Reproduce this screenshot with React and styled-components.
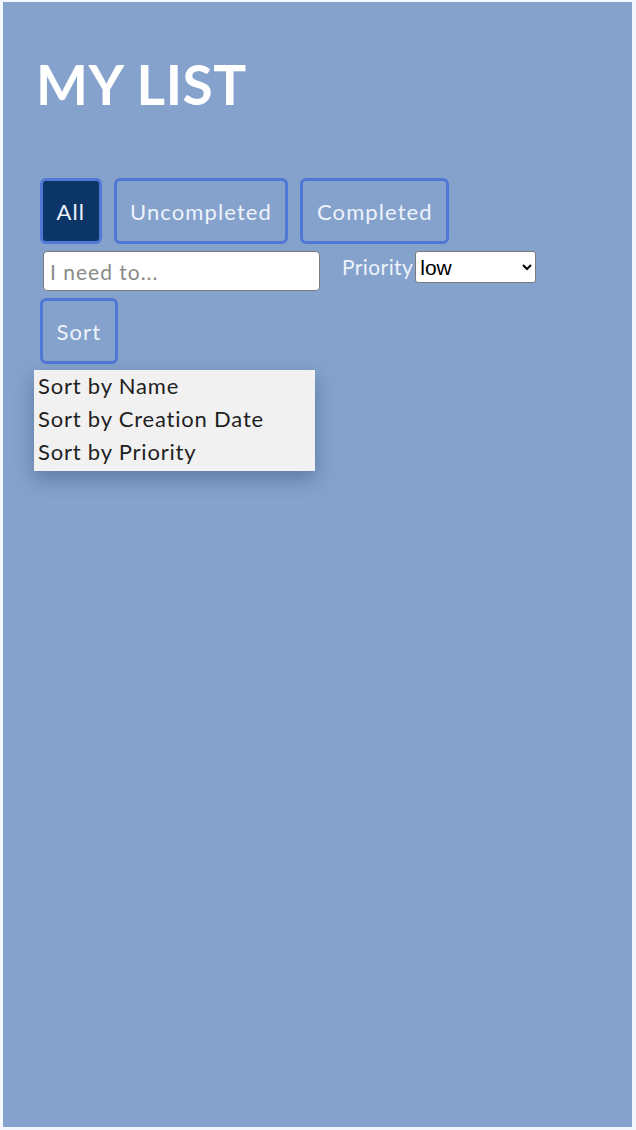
import styled, { createGlobalStyle } from "styled-components";

const GlobalStyle = createGlobalStyle`
    html, body {
        margin: 0;
        padding: 0;
        background: #f4f7fb;
    }
    body {
        font-family: Lato, "Noto Sans", sans-serif;
    }
`;

const Page = styled.div`
    margin: 2px 4px 3px 3px;
    height: 1125px;
    background: #84a2cc;
    padding: 50px 0 0 33px;
    box-sizing: border-box;
`;

const Title = styled.h1`
    margin: 0 0 62px;
    font-size: 55px;
    font-weight: 700;
    color: #ffffff;
    line-height: 64px;
    letter-spacing: 0.6px;
`;

const Controls = styled.div`
    padding-left: 4px;
    display: flex;
    flex-direction: column;
    gap: 7px;
`;

const Filters = styled.div`
    display: flex;
    gap: 12px;
`;

const Button = styled.button`
    height: 66px;
    padding: 0 13.5px;
    border: 3px solid #5177d6;
    border-radius: 6px;
    background: ${(p) => (p.$active ? "#0a3566" : "transparent")};
    color: #eef3fb;
    font-family: Lato, "Noto Sans", sans-serif;
    font-size: 22px;
    font-weight: 400;
    letter-spacing: 1.1px;
    cursor: pointer;
`;

const FormRow = styled.div`
    display: flex;
    align-items: flex-start;
`;

const TextInput = styled.input`
    width: 277px;
    height: 40px;
    box-sizing: border-box;
    margin-left: 3px;
    border: 1px solid #7a7a7a;
    border-radius: 4px;
    padding: 0 6px;
    font-family: Lato, "Noto Sans", sans-serif;
    font-size: 21px;
    letter-spacing: 1px;
    &::placeholder {
        color: #8a8a8a;
    }
`;

const Label = styled.label`
    margin-left: 22px;
    margin-top: 3px;
    font-size: 21px;
    letter-spacing: 0.4px;
    color: #eef3fb;
    line-height: 26px;
`;

const Select = styled.select`
    width: 121px;
    height: 32px;
    margin-left: 2px;
    border: 1px solid #7a7a7a;
    border-radius: 3px;
    background: #fff;
    font-family: "Liberation Sans", Arial, sans-serif;
    font-size: 21px;
    color: #000;
`;

const SortWrap = styled.div`
    position: relative;
`;

const Menu = styled.ul`
    position: absolute;
    left: -6px;
    top: 72px;
    width: 281px;
    margin: 0;
    padding: 1px 0 1px;
    list-style: none;
    background: #f1f1f1;
    box-shadow: 0 8px 18px rgba(30, 50, 90, 0.35);
`;

const MenuItem = styled.li`
    padding: 0 4px;
    height: 33px;
    line-height: 30px;
    font-size: 22px;
    letter-spacing: 0.8px;
    color: #1f1f1f;
`;

export default function App() {
    return (
        <>
            <GlobalStyle />
            <Page>
                <Title>MY LIST</Title>
                <Controls>
                    <Filters>
                        <Button $active>All</Button>
                        <Button>Uncompleted</Button>
                        <Button>Completed</Button>
                    </Filters>
                    <FormRow>
                        <TextInput placeholder="I need to..." />
                        <Label>Priority</Label>
                        <Select defaultValue="low">
                            <option value="low">low</option>
                            <option value="medium">medium</option>
                            <option value="high">high</option>
                        </Select>
                    </FormRow>
                    <SortWrap>
                        <Button>Sort</Button>
                        <Menu>
                            <MenuItem>Sort by Name</MenuItem>
                            <MenuItem>Sort by Creation Date</MenuItem>
                            <MenuItem>Sort by Priority</MenuItem>
                        </Menu>
                    </SortWrap>
                </Controls>
            </Page>
        </>
    );
}
